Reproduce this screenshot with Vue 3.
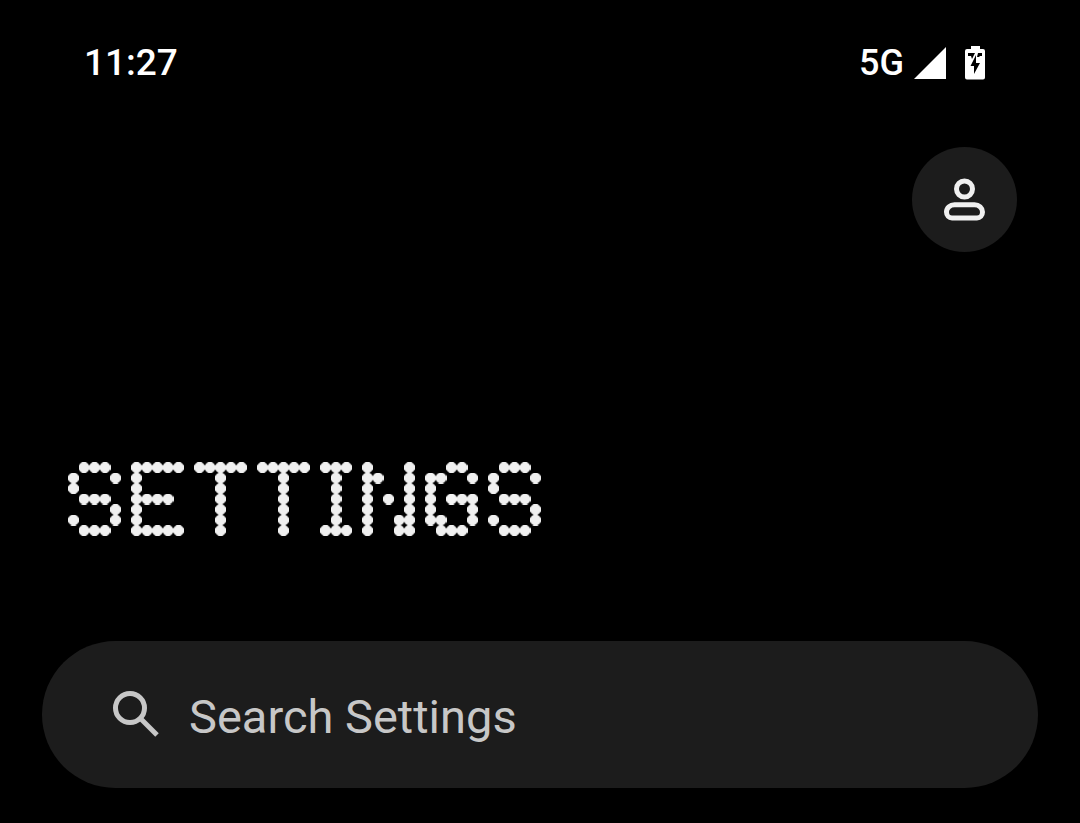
<script setup>
import { ref } from 'vue'

const title = [...'SETTINGS']
const query = ref('')
</script>

<template>
  <div class="screen">
    <header class="status">
      <time class="clock">11:27</time>
      <div class="indicators">
        <span>5G</span>
        <svg class="signal" viewBox="0 0 32 32" aria-hidden="true"><path d="M0 32 32 0v32z" /></svg>
        <svg class="battery" viewBox="0 0 20 34" aria-hidden="true">
          <path fill-rule="evenodd" d="M6 0h9v3h3q2 0 2 2v26.5q0 2-2 2H2q-2 0-2-2V5q0-2 2-2h4zM3 7v3h3l1 3 3-6zM13 7l-1 4h2l1-1h2V7zM11 9 5.500 20H9v8l6-11h-4z" />
        </svg>
      </div>
    </header>

    <div class="toolbar">
      <button class="profile" type="button" aria-label="Profile">
        <svg viewBox="0 0 45 44" aria-hidden="true">
          <circle cx="22.500" cy="11" r="8" />
          <path d="M12.500 26.700h20c4.500 0 8 3.300 8 7.300 0 3.500-2.500 6-5.500 6H10c-3 0-5.500-2.500-5.500-6 0-4 3.500-7.300 8-7.300z" />
        </svg>
      </button>
    </div>

    <!-- Lights one dot of the display wherever a letter covers the centre of its cell. -->
    <svg class="defs" width="0" height="0" aria-hidden="true">
      <filter id="dots" x="0" y="0" width="504" height="132" filterUnits="userSpaceOnUse" primitiveUnits="userSpaceOnUse" color-interpolation-filters="sRGB">
        <feFlood x="0" y="0" width="1" height="1" flood-color="#fff" result="a" />
        <feFlood x="10" y="0" width="1" height="1" flood-color="#fff" result="b" />
        <feFlood x="0" y="10" width="1" height="1" flood-color="#fff" result="c" />
        <feFlood x="10" y="10" width="1" height="1" flood-color="#fff" result="d" />
        <feMerge x="0" y="0" width="21" height="21" result="tile">
          <feMergeNode in="a" /><feMergeNode in="b" /><feMergeNode in="c" /><feMergeNode in="d" />
        </feMerge>
        <feTile in="tile" result="grid" />
        <feComposite in="SourceGraphic" in2="grid" operator="in" />
        <feComponentTransfer><feFuncA type="linear" slope="40" intercept="-3.5" /></feComponentTransfer>
        <feMorphology operator="dilate" radius="5" />
      </filter>
    </svg>
    <h1 class="title" aria-label="SETTINGS">
      <span class="word"><span v-for="(letter, i) in title" :key="i">{{ letter }}</span></span>
    </h1>

    <label class="search">
      <svg viewBox="0 0 48 48" aria-hidden="true">
        <circle cx="18" cy="17" r="14.500" />
        <path d="m28 27 17 17" />
      </svg>
      <input v-model="query" type="search" placeholder="Search Settings" aria-label="Search Settings" />
    </label>
  </div>
</template>

<style>
body {
  margin: 0;
  background: #000;
}
</style>

<style scoped>
.screen {
  box-sizing: border-box;
  min-height: 100vh;
  padding: 40px 42px 35px;
  background: #000;
  color: #fff;
  font-family: Roboto, "Liberation Sans", sans-serif;
}

.status {
  display: flex;
  justify-content: space-between;
  height: 46px;
  padding: 0 53px 0 42px;
  font-size: 37px;
  font-weight: 500;
  line-height: 46px;
}

.indicators {
  display: flex;
  align-items: center;
  font-size: 36px;
}

.signal {
  width: 32px;
  height: 32px;
  margin: 0 19px 0 10px;
  fill: #fff;
}

.battery {
  width: 20px;
  height: 34px;
  fill: #fff;
}

.toolbar {
  display: flex;
  justify-content: flex-end;
  padding: 61px 21px 0;
}

.profile {
  display: grid;
  place-items: center;
  width: 105px;
  height: 105px;
  padding: 0;
  border: 0;
  border-radius: 50%;
  background: #1c1c1c;
}

.profile svg {
  width: 45px;
  height: 44px;
  fill: none;
  stroke: #f0f0f0;
  stroke-width: 5;
}

.defs {
  position: absolute;
}

.title {
  width: fit-content;
  margin: 184px 0 0 21px;
  color: #f0f0f0;
  font-size: 105px;
  font-weight: 400;
  mask: radial-gradient(circle closest-side, #000 96%, transparent 110%) -0.05em -0.05em / 0.1em 0.1em;
}

.word {
  display: grid;
  grid-template-columns: repeat(4, 63px) 43px 62px repeat(2, 63px);
  justify-items: center;
  padding: 12px 0 1px;
  font-family: "Liberation Mono", monospace;
  font-size: 101px;
  line-height: 116px;
  filter: url(#dots);
}

.search {
  display: flex;
  align-items: center;
  gap: 29px;
  height: 147px;
  margin-top: 76px;
  padding: 0 70px;
  border-radius: 74px;
  background: #1c1c1c;
  color: #c7c7c7;
}

.search svg {
  flex: none;
  width: 48px;
  height: 48px;
  fill: none;
  stroke: #c7c7c7;
  stroke-width: 5;
}

.search input {
  flex: 1;
  min-width: 0;
  padding: 4px 0 0;
  border: 0;
  outline: 0;
  background: none;
  color: inherit;
  font: 400 47px/72px Roboto, "Liberation Sans", sans-serif;
  appearance: none;
}

.search input::placeholder {
  color: #c7c7c7;
  opacity: 1;
}
</style>
